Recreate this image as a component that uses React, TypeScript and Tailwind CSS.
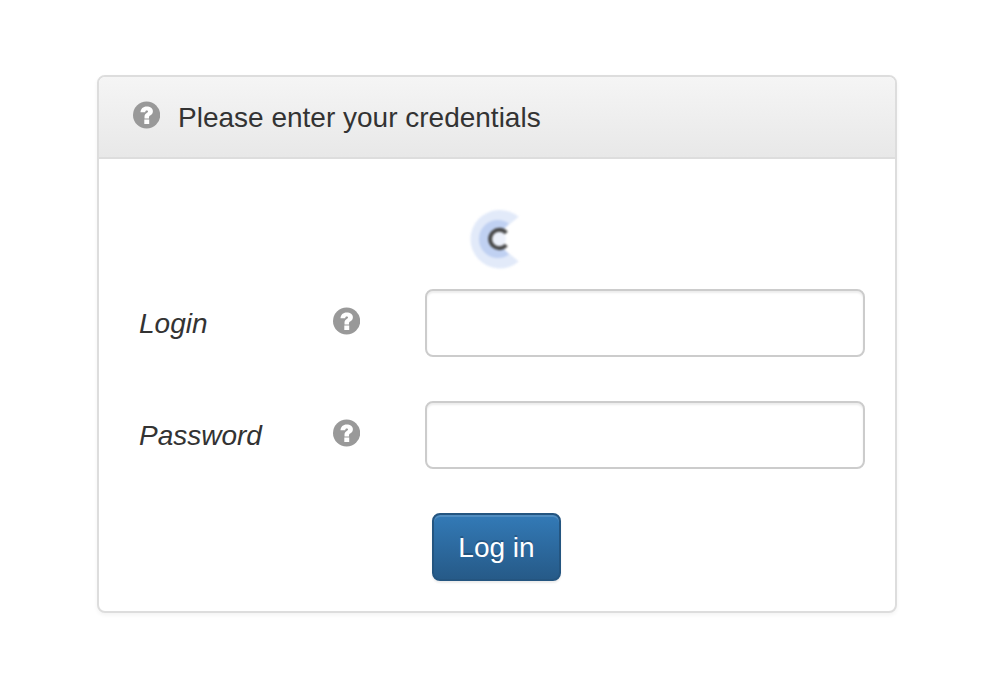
import React from "react";

function HelpIcon() {
  return (
    <svg className="block h-7 w-7 shrink-0" viewBox="-0.6 0 28 28" aria-hidden="true">
      <circle cx="14" cy="14" r="13.6" fill="#999999" />
      <path
        d="M7.9 11.2 C8.1 7.6 10.4 5.4 14.1 5.4 C17.7 5.4 20.3 7.3 20.3 10.3 C20.3 12.5 19 13.7 17.6 14.6 C16.8 15.1 16.4 15.5 16.4 16.3 V17.4 H11.9 V15.7 C11.9 13.8 12.7 12.8 14.1 11.9 C15 11.3 15.4 11 15.4 10.4 C15.4 9.8 14.9 9.4 14.1 9.4 C13.1 9.4 12.7 10 12.6 11.2 Z M11.7 18.6 H16.6 V23 H11.7 Z"
        fill="#ffffff"
      />
    </svg>
  );
}

function Spinner() {
  return (
    <svg className="h-[60px] w-[54px] blur-[0.8px]" viewBox="0.5 0 54 60" aria-hidden="true">
      <path d="M50.2 7.8 A29.3 29.3 0 1 0 50.2 52.6 L36.5 41 L25 30 L36.5 19 Z" fill="#e2eaf9" />
      <path d="M40.5 14.5 A19 19 0 1 0 40.5 45.5 L35.5 40 L25 30 L35.5 20 Z" fill="#c0d1f2" />
      <circle cx="29.5" cy="30" r="8" fill="#edf1fb" />
      <path d="M37.8 24 A9.2 9.2 0 1 0 37.8 36" fill="none" stroke="#484848" strokeWidth="3.9" />
    </svg>
  );
}

function Field({ label, type }: { label: string; type: string }) {
  return (
    <label className="flex h-[68px] items-center">
      <span className="w-[193px] pt-px italic">{label}</span>
      <span className="w-[93px] pb-1"><HelpIcon /></span>
      <input
        type={type}
        className="h-[68px] w-[440px] rounded-[8px] border-2 border-[#cccccc] bg-white px-6 shadow-[inset_0_2px_2px_rgba(0,0,0,0.075)] outline-none"
      />
    </label>
  );
}

export default function App() {
  return (
    <main className="h-[691px] w-[997px] bg-white pt-[75px] pl-[97px] font-['Liberation_Sans',Arial,sans-serif] text-[28px] leading-10 text-[#333333]">
      <section className="h-[538px] w-[800px] rounded-[8px] border-2 border-[#dddddd] bg-white shadow-[0_2px_4px_rgba(0,0,0,0.05)]">
        <header className="flex h-[82px] items-center rounded-t-[6px] border-b-2 border-[#dddddd] bg-linear-to-b from-[#f5f5f5] to-[#e8e8e8] pl-[33px]">
          <span className="mr-[18px] pb-1"><HelpIcon /></span>
          <h1 className="pt-0.5">Please enter your credentials</h1>
        </header>
        <form className="flex flex-col pt-[50px] pl-10" onSubmit={(e) => e.preventDefault()}>
          <div className="mb-5 ml-[330px] h-[60px]"><Spinner /></div>
          <Field label="Login" type="text" />
          <div className="h-11" />
          <Field label="Password" type="password" />
          <button className="mt-11 ml-[293px] h-[68px] w-[129px] rounded-[8px] border-2 border-[#245580] bg-linear-to-b from-[#337ab7] to-[#265a88] pt-0.5 text-white shadow-[inset_0_2px_0_rgba(255,255,255,0.15),0_2px_2px_rgba(0,0,0,0.075)] [text-shadow:0_-2px_0_rgba(0,0,0,0.2)]">
            Log in
          </button>
        </form>
      </section>
    </main>
  );
}
